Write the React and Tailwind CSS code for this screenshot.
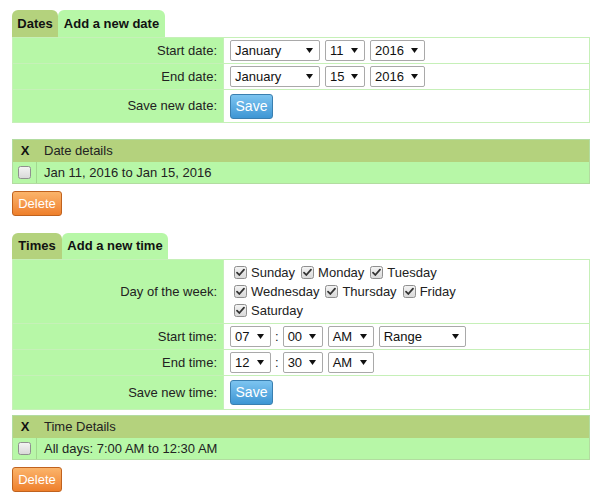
import React from "react";

const font = { fontFamily: '"Liberation Sans", Arial, sans-serif' };

function Arrow() {
  return (
    <svg width="7" height="5" viewBox="0 0 7 5" className="shrink-0">
      <path d="M0 0 L7 0 L3.5 5 Z" fill="#111" />
    </svg>
  );
}

function Sel({ value, w }) {
  return (
    <div
      className={`flex h-[21px] items-center justify-between rounded-[2px] border border-[#a9a9a9] bg-white pl-[4px] pr-[6px] text-[13px] text-[#111] ${w}`}
    >
      <span>{value}</span>
      <Arrow />
    </div>
  );
}

function Check({ checked }) {
  return (
    <svg width="13" height="13" viewBox="0 0 13 13" className="shrink-0">
      <defs>
        <linearGradient id={checked ? "cg1" : "cg2"} x1="0" y1="0" x2="0" y2="1">
          <stop offset="0" stopColor="#f4f4f4" />
          <stop offset="1" stopColor="#d8d8d8" />
        </linearGradient>
      </defs>
      <rect x="0.5" y="0.5" width="12" height="12" rx="2" fill={`url(#${checked ? "cg1" : "cg2"})`} stroke="#8f8f8f" />
      {checked && (
        <path d="M3 6.6 L5.3 9 L10 3.6" fill="none" stroke="#333" strokeWidth="1.8" strokeLinecap="round" strokeLinejoin="round" />
      )}
    </svg>
  );
}

function SaveBtn() {
  return (
    <div className="flex h-[25px] w-[43px] items-center justify-center rounded-[3px] border border-[#3a7fb0] bg-gradient-to-b from-[#7cc4f0] to-[#3d96d4] text-[14px] text-white">
      Save
    </div>
  );
}

function DeleteBtn() {
  return (
    <div className="flex h-[25px] w-[50px] items-center justify-center rounded-[3px] border border-[#c0621e] bg-gradient-to-b from-[#fbb46a] to-[#ee7f2a] text-[13px] text-white">
      Delete
    </div>
  );
}

function Tabs({ first, second, w1, w2 }) {
  return (
    <div className="flex">
      <div className={`flex items-center justify-center rounded-t-[6px] bg-[#b4d27d] text-[13px] font-bold text-[#111] ${w1}`}>
        {first}
      </div>
      <div className={`flex items-center justify-center rounded-t-[6px] bg-[#b7f7a7] text-[13px] font-bold text-[#111] ${w2}`}>
        {second}
      </div>
    </div>
  );
}

function Row({ label, h, children, first }) {
  return (
    <div className={`flex ${first ? "" : "border-t border-[#c6f0b8]"}`}>
      <div className={`flex w-[210px] items-center justify-end bg-[#b7f7a7] pr-[6px] text-[13px] text-[#222] ${h}`}>
        {label}
      </div>
      <div className="w-px bg-[#c6f0b8]" />
      <div className={`flex flex-1 items-center bg-white pl-[6px] ${h}`}>{children}</div>
    </div>
  );
}

function Details({ head, text }) {
  return (
    <div className="w-[578px] border border-[#b2dca0] text-[13px] text-[#222]">
      <div className="flex h-[22px] bg-[#b4d27d]">
        <div className="flex w-[24px] items-center justify-center font-bold text-[#111]">X</div>
        <div className="flex items-center pl-[7px]">{head}</div>
      </div>
      <div className="flex h-[21px] bg-[#b7f7a7]">
        <div className="flex w-[24px] items-center justify-center border-r border-[#a3d890]">
          <Check />
        </div>
        <div className="flex items-center pl-[7px]">{text}</div>
      </div>
    </div>
  );
}

function Day({ label }) {
  return (
    <span className="mr-[6px] inline-flex items-center gap-[4px]">
      <Check checked />
      <span>{label}</span>
    </span>
  );
}

export default function App() {
  return (
    <div className="min-h-[500px] bg-white pl-[12px] pt-[10px]" style={font}>
      <Tabs first="Dates" second="Add a new date" w1="w-[46px] h-[27px]" w2="w-[107px] h-[27px]" />
      <div className="w-[578px] border border-[#c6f0b8]">
        <Row label="Start date:" h="h-[25px]" first>
          <div className="flex gap-[5px]">
            <Sel value="January" w="w-[90px]" />
            <Sel value="11" w="w-[40px]" />
            <Sel value="2016" w="w-[55px]" />
          </div>
        </Row>
        <Row label="End date:" h="h-[25px]">
          <div className="flex gap-[5px]">
            <Sel value="January" w="w-[90px]" />
            <Sel value="15" w="w-[40px]" />
            <Sel value="2016" w="w-[55px]" />
          </div>
        </Row>
        <Row label="Save new date:" h="h-[32px]">
          <SaveBtn />
        </Row>
      </div>

      <div className="mt-[16px]">
        <Details head="Date details" text="Jan 11, 2016 to Jan 15, 2016" />
      </div>
      <div className="mt-[7px]">
        <DeleteBtn />
      </div>

      <div className="mt-[17px]">
        <Tabs first="Times" second="Add a new time" w1="w-[50px] h-[26px]" w2="w-[106px] h-[26px]" />
      </div>
      <div className="w-[578px] border border-[#c6f0b8]">
        <Row label="Day of the week:" h="h-[63px]" first>
          <div className="pl-[4px] text-[13px] leading-[19px] text-[#222]">
            <div className="flex">
              <Day label="Sunday" />
              <Day label="Monday" />
              <Day label="Tuesday" />
            </div>
            <div className="flex">
              <Day label="Wednesday" />
              <Day label="Thursday" />
              <Day label="Friday" />
            </div>
            <div className="flex">
              <Day label="Saturday" />
            </div>
          </div>
        </Row>
        <Row label="Start time:" h="h-[25px]">
          <div className="flex items-center text-[13px] text-[#222]">
            <Sel value="07" w="w-[41px]" />
            <span className="mx-[4px]">:</span>
            <Sel value="00" w="w-[40px]" />
            <div className="ml-[5px]">
              <Sel value="AM" w="w-[46px]" />
            </div>
            <div className="ml-[5px]">
              <Sel value="Range" w="w-[87px]" />
            </div>
          </div>
        </Row>
        <Row label="End time:" h="h-[25px]">
          <div className="flex items-center text-[13px] text-[#222]">
            <Sel value="12" w="w-[41px]" />
            <span className="mx-[4px]">:</span>
            <Sel value="30" w="w-[40px]" />
            <div className="ml-[5px]">
              <Sel value="AM" w="w-[46px]" />
            </div>
          </div>
        </Row>
        <Row label="Save new time:" h="h-[33px]">
          <SaveBtn />
        </Row>
      </div>

      <div className="mt-[5px]">
        <Details head="Time Details" text="All days: 7:00 AM to 12:30 AM" />
      </div>
      <div className="mt-[7px]">
        <DeleteBtn />
      </div>
    </div>
  );
}
